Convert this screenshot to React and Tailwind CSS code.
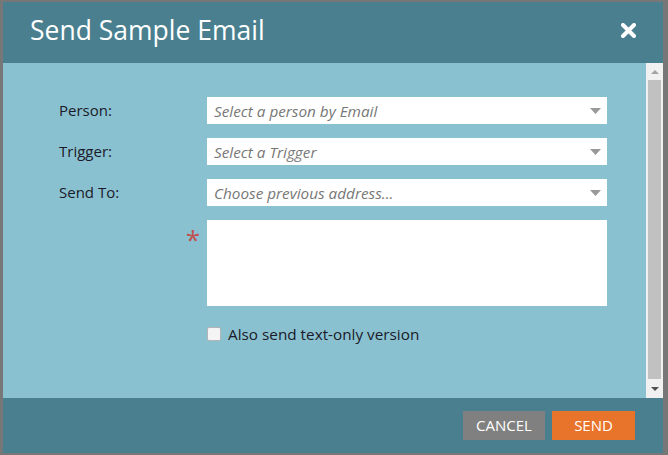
// App.jsx — Send Sample Email dialog
const FONT = { fontFamily: '"Open Sans", "Noto Sans", sans-serif' };

function Caret({ className = '' }) {
    return (
        <svg width="11" height="6" viewBox="0 0 11 6" className={className}>
            <path d="M0 0 L11 0 L5.5 6 Z" fill="currentColor" />
        </svg>
    );
}

function SelectBox({ placeholder }) {
    return (
        <div className="h-[27px] w-[400px] bg-white flex items-center justify-between pl-[7px] pr-[6px]">
            <span className="italic text-[15.3px] text-[#777] pt-[1px]">{placeholder}</span>
            <Caret className="text-[#999]" />
        </div>
    );
}

function Row({ label, children }) {
    return (
        <div className="flex items-center">
            <div className="w-[148px] text-[15px] text-[#1a1a28]">{label}</div>
            {children}
        </div>
    );
}

function ScrollBar() {
    return (
        <div className="w-[17px] bg-[#f1f1f1] flex flex-col items-center">
            {/* flèche haut */}
            <div className="h-[17px] flex items-center justify-center text-[#a3a3a3]">
                <svg width="8" height="4" viewBox="0 0 8 4"><path d="M4 0 L8 4 L0 4 Z" fill="currentColor" /></svg>
            </div>
            <div className="flex-1 w-[13px] bg-[#c1c1c1]" />
            {/* flèche bas */}
            <div className="h-[19px] flex items-center justify-center text-[#505050]">
                <svg width="8" height="4" viewBox="0 0 8 4"><path d="M0 0 L8 0 L4 4 Z" fill="currentColor" /></svg>
            </div>
        </div>
    );
}

export default function App() {
    return (
        <div className="w-[668px] h-[455px] bg-[#777] pt-[2px] pl-[3px] pr-[5px] pb-[2px]" style={FONT}>
            <div className="h-full flex flex-col">

                {/* HEADER */}
                <div className="h-[61px] bg-[#4a7f8f] flex items-center justify-between pl-[27px] pr-[27px]">
                    <h1 className="text-[26.5px] text-white leading-none pb-[4px]">Send Sample Email</h1>
                    <svg width="15" height="15" viewBox="0 0 15 15" className="mt-[-4px]">
                        <path d="M2 2 L13 13 M13 2 L2 13" stroke="white" strokeWidth="4" strokeLinecap="round" />
                    </svg>
                </div>

                {/* BODY */}
                <div className="flex-1 bg-[#8ac1d0] flex">
                    <div className="flex-1 pl-[56px] pt-[34px] flex flex-col gap-[14px]">
                        <Row label="Person:">
                            <SelectBox placeholder="Select a person by Email" />
                        </Row>
                        <Row label="Trigger:">
                            <SelectBox placeholder="Select a Trigger" />
                        </Row>
                        <Row label="Send To:">
                            <SelectBox placeholder="Choose previous address..." />
                        </Row>
                        <div className="flex">
                            <div className="w-[148px] flex justify-end pr-[7px]">
                                <span className="text-[26px] leading-none text-[#c0504f] mt-[6px]">*</span>
                            </div>
                            <div className="h-[86px] w-[400px] bg-white" />
                        </div>
                        <div className="flex items-center pl-[148px] mt-[3px]">
                            <div className="w-[14px] h-[14px] bg-[#f4f4f4] border border-[#b5b5b5] rounded-[2px]" />
                            <span className="ml-[7px] text-[15.3px] text-[#1a1a28]">Also send text-only version</span>
                        </div>
                    </div>
                    <ScrollBar />
                </div>

                {/* FOOTER */}
                <div className="h-[55px] bg-[#4a7f8f] flex items-center justify-end gap-[7px] pr-[28px]">
                    <button className="w-[82px] h-[29px] bg-[#808080] text-white text-[15px] uppercase">Cancel</button>
                    <button className="w-[83px] h-[29px] bg-[#e8732a] text-white text-[15px] uppercase">Send</button>
                </div>
            </div>
        </div>
    );
}
